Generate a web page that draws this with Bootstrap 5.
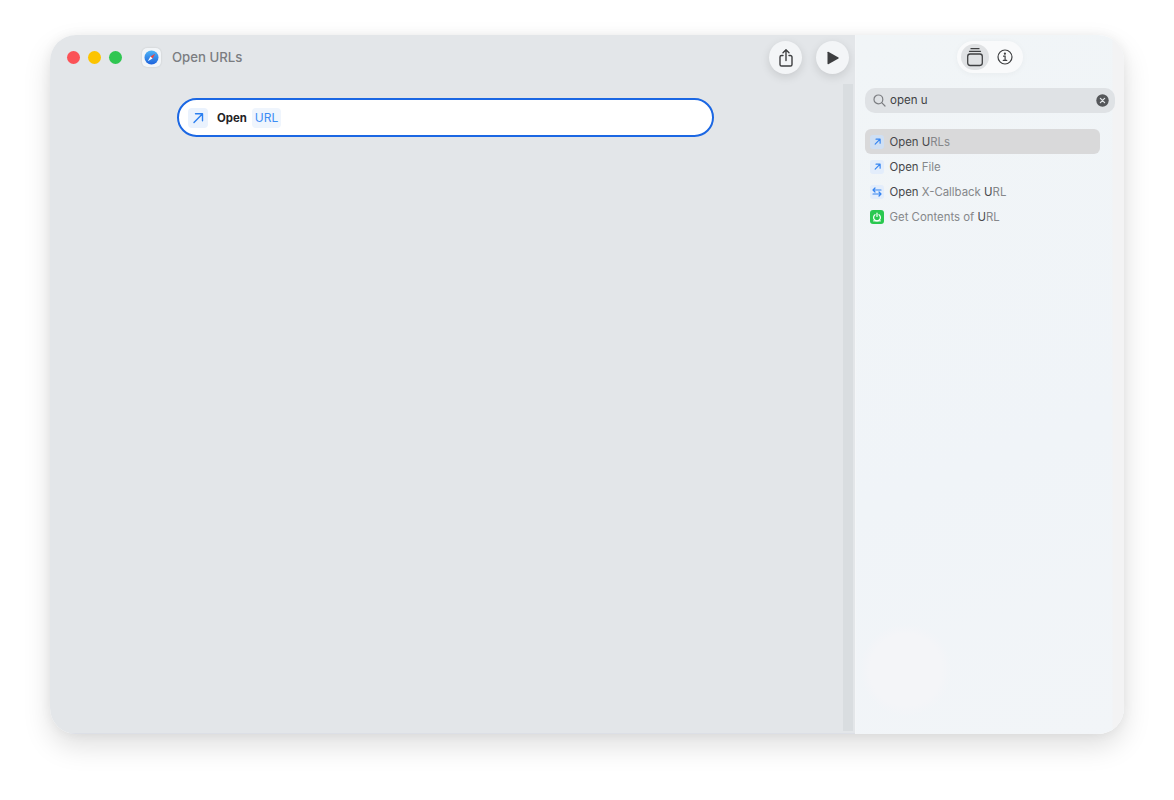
<!DOCTYPE html>
<html lang="en">
<head>
  <meta charset="UTF-8" />
  <meta name="viewport" content="width=device-width, initial-scale=1" />
  <title>Open URLs</title>
  <link href="https://cdn.jsdelivr.net/npm/bootstrap@5.3.3/dist/css/bootstrap.min.css" rel="stylesheet" />
  <style>
    html, body { height: 800px; overflow: hidden; }
    body {
      background: #fff;
      font-family: Inter, "Liberation Sans", sans-serif;
      padding: 35px 50px 66px 50px;
    }
    .shortcut-window {
      height: 699px;
      border-radius: 26px;
      overflow: hidden;
    }
    .window-shadow {
      border-radius: 26px;
      box-shadow: 0 12px 28px rgba(0,0,0,.13), 0 0 12px rgba(0,0,0,.05);
    }
    .editor-pane {
      width: 805px;
      background: #e3e6e9;
      border-bottom: 1px solid #dcdfe6;
    }
    .editor-head { height: 49px; padding: 6px 6px 0 17px; }
    .light { width: 13px; height: 13px; border-radius: 50%; }
    .app-icon {
      width: 19px; height: 19px; border-radius: 5px; background: #f2f5f8;
      margin-left: 20px; margin-right: 11px;
      box-shadow: 0 0 2px rgba(0,0,0,.15);
    }
    .window-title { font-size: 13.2px; font-weight: 500; color: #7b7d81; }
    .round-btn {
      width: 33px; height: 33px; border-radius: 50%; background: #f3f5f7; border: 0; padding: 0;
      box-shadow: 0 3px 10px rgba(0,0,0,.12);
    }
    .gap-head { gap: 14px; }
    .canvas { padding: 14px 129px 0 127px; }
    .action-pill {
      height: 39px; background: #fff; border: 2px solid #1b67e3; border-radius: 20px;
      padding-left: 9px; font-size: 11.4px; font-weight: 700; color: #242426;
    }
    .action-icon {
      width: 20px; height: 20px; background: #eaf2fd; border-radius: 4px; margin-right: 9px;
    }
    .action-label { padding-top: 2px; }
    .token {
      background: #eff5fd; color: #3d8df5; border-radius: 4px; font-weight: 400;
      padding: 1px 3px; margin-left: 5px; font-size: 12px;
    }
    .scroll-track { width: 10px; margin: 0 2px 2px 0; background: #d9dde0; }
    .side-pane {
      flex: 1;
      background:
        radial-gradient(circle at 50px 635px, #f4f5f8 0, #f4f5f8 36px, transparent 46px),
        linear-gradient(to right, transparent 95.5%, #f3f3f4 96%),
        linear-gradient(160deg, #f1f5f7 0%, #f0f4f8 60%, #f2f5f8 100%);
      border-left: 1px solid #f4f6f8;
      padding: 6px 9px 0 9px;
    }
    .segment {
      width: 66px; height: 32px; background: #f9fafb; border-radius: 16px; padding: 3px 4px;
      box-shadow: 0 1px 6px rgba(0,0,0,.04);
    }
    .segment-item { width: 28px; height: 26px; }
    .segment-item.active { background: #e0e2e4; border-radius: 13px; }
    .search-box {
      height: 25px; background: #dfe2e5; border-radius: 10px; margin-top: 15px;
      padding: 0 6px 0 8px; font-size: 11.5px; color: #404144;
    }
    .search-box span { padding-top: 1px; }
    .result-list { margin-top: 16px; width: 235px; }
    .result-row {
      height: 25px; border-radius: 6px; padding-left: 5px; font-size: 11.4px; color: #85878a; gap: 5.5px;
    }
    .result-row > span:last-child { padding-top: 2px; }
    .result-row.active { background: #d9d9da; }
    .result-row b { font-weight: 400; color: #47484b; }
    .mini-icon { width: 14px; height: 14px; border-radius: 3px; background: #e3edfb; flex: none; }
    .result-row.active .mini-icon { background: #cfdff3; }
    .mini-icon.green { background: #2ac84f; }
  </style>
</head>
<body>
  <div class="window-shadow">
    <div class="shortcut-window d-flex">
      <div class="editor-pane d-flex flex-column">
        <div class="editor-head d-flex align-items-start">
          <div class="d-flex align-items-center" style="height:33px">
            <div class="d-flex gap-2">
              <span class="light" style="background:#fb5257"></span>
              <span class="light" style="background:#fcc400"></span>
              <span class="light" style="background:#2fc651"></span>
            </div>
            <span class="app-icon d-flex align-items-center justify-content-center">
              <svg width="15" height="15" viewBox="0 0 15 15">
                <defs><linearGradient id="sky" x1="0" y1="0" x2="0" y2="1"><stop offset="0" stop-color="#4fb4f6"/><stop offset="1" stop-color="#1d62dc"/></linearGradient></defs>
                <circle cx="7.5" cy="7.5" r="7" fill="url(#sky)"/>
                <path d="M11.2 3.8 6.5 6.5l2 2z" fill="#f0443c"/>
                <path d="M3.8 11.2 8.5 8.5l-2-2z" fill="#fff"/>
              </svg>
            </span>
            <span class="window-title">Open URLs</span>
          </div>
          <div class="ms-auto d-flex gap-head">
            <button class="round-btn d-flex align-items-center justify-content-center" type="button" aria-label="Share">
              <svg width="16" height="20" viewBox="0 0 16 20" fill="none" stroke="#3d3e40" stroke-width="1.4" stroke-linecap="round" stroke-linejoin="round">
                <path d="M5 7.5H3.6A1.6 1.6 0 0 0 2 9.1v7.3A1.6 1.6 0 0 0 3.6 18h8.8a1.6 1.6 0 0 0 1.6-1.6V9.1a1.6 1.6 0 0 0-1.6-1.6H11"/>
                <path d="M8 12.5V2M5 4.7 8 1.8l3 2.9"/>
              </svg>
            </button>
            <button class="round-btn d-flex align-items-center justify-content-center" type="button" aria-label="Run">
              <svg width="14" height="14" viewBox="0 0 14 14"><path d="M1.5 1.2v11.6c0 .4.4.6.8.4l10.2-5.8c.3-.2.3-.6 0-.8L2.3.8c-.4-.2-.8 0-.8.4z" fill="#3d3e40"/></svg>
            </button>
          </div>
        </div>
        <div class="d-flex flex-grow-1">
          <div class="canvas flex-grow-1">
            <div class="action-pill d-flex align-items-center">
              <span class="action-icon d-flex align-items-center justify-content-center">
                <svg width="12" height="12" viewBox="0 0 12 12" fill="none" stroke="#2b7ff0" stroke-width="1.4" stroke-linecap="round" stroke-linejoin="round"><path d="M2 10.5 10.3 2M3.5 1.7h7v7"/></svg>
              </span>
              <span class="action-label">Open</span>
              <span class="token">URL</span>
            </div>
          </div>
          <div class="scroll-track"></div>
        </div>
      </div>
      <div class="side-pane">
        <div class="d-flex justify-content-center">
          <div class="segment d-flex align-items-center justify-content-between">
            <span class="segment-item active d-flex align-items-center justify-content-center">
              <svg width="18" height="20" viewBox="0 0 18 20" fill="none" stroke="#3f4042" stroke-width="1.3" stroke-linecap="round">
                <rect x="1.7" y="7" width="14.6" height="11.5" rx="2.4"/>
                <path d="M3.5 4.3h11M5 1.7h8"/>
              </svg>
            </span>
            <span class="segment-item d-flex align-items-center justify-content-center">
              <svg width="16" height="16" viewBox="0 0 16 16" fill="none" stroke="#3f4042" stroke-width="1.2" stroke-linecap="round">
                <circle cx="8" cy="8" r="7"/>
                <path d="M6.5 7.2h1.6v4M6.2 11.3h3.6"/>
                <circle cx="7.9" cy="4.7" r=".5" fill="#3f4042"/>
              </svg>
            </span>
          </div>
        </div>
        <div class="search-box d-flex align-items-center">
          <svg class="me-1" width="13" height="13" viewBox="0 0 13 13" fill="none" stroke="#7c7e82" stroke-width="1.2" stroke-linecap="round"><circle cx="5.4" cy="5.4" r="4.4"/><path d="M8.7 8.7 12 12"/></svg>
          <span>open u</span>
          <svg class="ms-auto" width="13" height="13" viewBox="0 0 13 13"><circle cx="6.5" cy="6.5" r="6.2" fill="#55575a"/><path d="M4.4 4.4l4.2 4.2M8.6 4.4 4.4 8.6" stroke="#dfe2e5" stroke-width="1.3" stroke-linecap="round"/></svg>
        </div>
        <div class="result-list">
          <div class="result-row active d-flex align-items-center">
            <span class="mini-icon d-flex align-items-center justify-content-center"><svg width="7" height="7" viewBox="0 0 12 12" fill="none" stroke="#3585f2" stroke-width="2" stroke-linecap="round" stroke-linejoin="round"><path d="M2 10.5 10 2.5M3.5 2h7v7"/></svg></span>
            <span><b>Open U</b>RLs</span>
          </div>
          <div class="result-row d-flex align-items-center">
            <span class="mini-icon d-flex align-items-center justify-content-center"><svg width="7" height="7" viewBox="0 0 12 12" fill="none" stroke="#3585f2" stroke-width="2" stroke-linecap="round" stroke-linejoin="round"><path d="M2 10.5 10 2.5M3.5 2h7v7"/></svg></span>
            <span><b>Open</b> File</span>
          </div>
          <div class="result-row d-flex align-items-center">
            <span class="mini-icon d-flex align-items-center justify-content-center"><svg width="10" height="10" viewBox="0 0 10 10" fill="none" stroke="#3585f2" stroke-width="1.2" stroke-linecap="round" stroke-linejoin="round"><path d="M1 3h8M3 1 1 3l2 2M9 7H1M7 5l2 2-2 2"/></svg></span>
            <span><b>Open</b> X-Callback <b>U</b>RL</span>
          </div>
          <div class="result-row d-flex align-items-center">
            <span class="mini-icon green d-flex align-items-center justify-content-center"><svg width="10" height="10" viewBox="0 0 10 10" fill="none" stroke="#fff" stroke-width="1.2" stroke-linecap="round"><path d="M3 2.7a3.4 3.4 0 1 0 4 0M5 1v3.4"/><path d="M1.5 8.9h7" stroke-width="1"/></svg></span>
            <span>Get Contents of <b>U</b>RL</span>
          </div>
        </div>
      </div>
    </div>
  </div>
</body>
</html>
